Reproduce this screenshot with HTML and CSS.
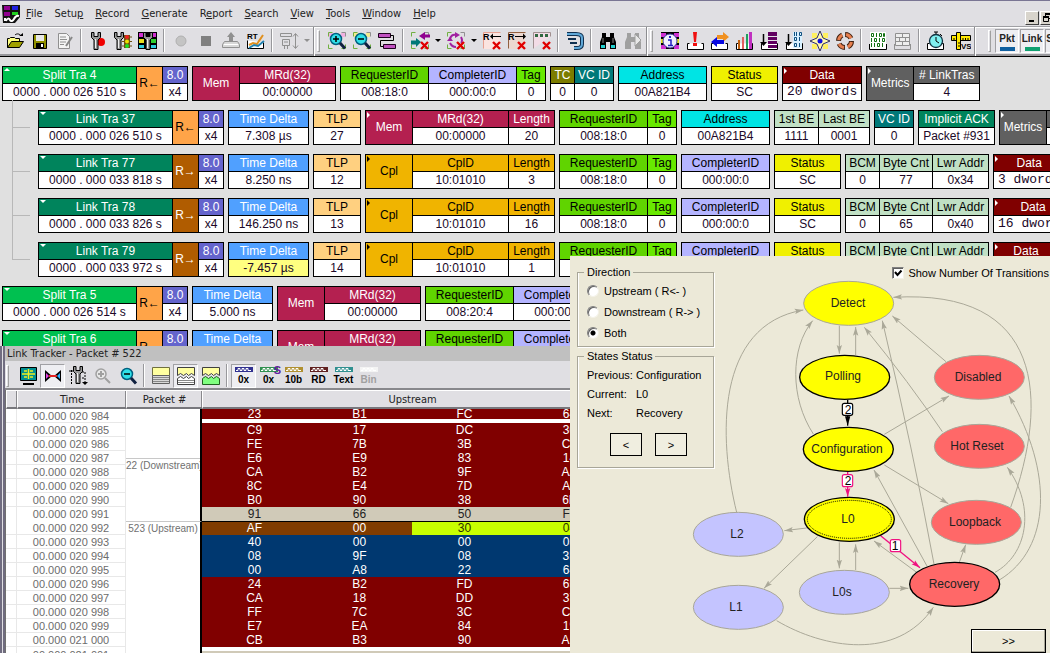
FILE: index.html
```html
<!DOCTYPE html>
<html lang="en">
<head>
<meta charset="utf-8">
<title>Protocol Analyzer</title>
<link rel="stylesheet" href="styles.css">
</head>
<body>
<svg class="defs" aria-hidden="true">
  <defs>
    <g id="tray"><path d="M3.5 12.5h-2v6h16v-6h-2" fill="#fff" stroke="#000"/></g>
    <g id="wrench"><path d="M.500 1.500v5l2.500 2.500v9.500h4v-9.500l2.500-2.500v-5h-2.500v4h-4v-4z" fill="#989898" stroke="#000"/><path d="M4.500 8v9" stroke="#f0f0f0"/></g>
    <g id="corners" fill="none" stroke="#70b040"><path d="M1.500 5.500v-4h4M1.500 13.500v4h4M14.500 17.500h4v-4"/><path d="M14.500 1.500h4v4" stroke="#909090"/></g>
    <g id="redx"><path d="M11 11l7 7M18 11l-7 7" stroke="#e00000" stroke-width="2.400"/></g>
    <g id="lens"><circle cx="9" cy="8" r="5.500" fill="#30e0e8" stroke="#006080" stroke-width="1.500"/><path d="M13 12l5 5.500" stroke="#102040" stroke-width="3"/></g>
    <g id="glasses"><path d="M4 2h4v4h4V2h4v4l2 5v7h-6v-7H8v7H2v-7l2-5z"/></g>
    <g id="strip"><rect width="18" height="5"/><path d="M1 3.500h2V1.500h2v2h2v-2h2v2h2v-2h2v2h3" fill="none" stroke="#fff"/></g>
  </defs>
</svg>

<header class="chrome">
  <nav class="menubar">
    <svg class="logo" viewBox="0 0 18 19"><path d="M0 1h18v12l-5 6H1z" fill="#111"/><path d="M2 2h6v4H2zM2 8h6v4H2z" fill="#900090"/><path d="M10 2h6v4h-6z" fill="#2020e0"/><path d="M10 8h6v3h-6z" fill="#20d020"/><path d="M4 17c1-3 3-3 4-1s3 1 4-1 2-4 5-3" stroke="#fff" stroke-width="2" fill="none"/><path d="M2 14h2v3H2z" fill="#fff"/></svg>
    <a href="#"><u>F</u>ile</a><a href="#">Setu<u>p</u></a><a href="#"><u>R</u>ecord</a><a href="#"><u>G</u>enerate</a><a href="#">R<u>e</u>port</a><a href="#"><u>S</u>earch</a><a href="#"><u>V</u>iew</a><a href="#"><u>T</u>ools</a><a href="#"><u>W</u>indow</a><a href="#"><u>H</u>elp</a>
    <div class="mdi">
      <button aria-label="Minimize"><svg viewBox="0 0 12 12"><path d="M3 9h5" stroke="#000" stroke-width="2"/></svg></button>
      <button aria-label="Restore"><svg viewBox="0 0 12 12"><path d="M4.500 4V2.500h5v4H8M2.500 5.500h5v4h-5z" fill="none" stroke="#000"/><path d="M4 2h6M2 5h6" stroke="#000" stroke-width="2"/></svg></button>
    </div>
  </nav>

  <div class="toolbar">
    <div class="band">
      <button class="tool" aria-label="Open"><svg viewBox="0 0 20 20"><path d="M2.500 16.500v-9h2l1-1h4l1 1h4v3" fill="#ffff80" stroke="#000"/><path d="M2.500 16.500l4-6h12l-4 6z" fill="#a0a000" stroke="#000"/><path d="M10 4c2-2 5-1 6 1" fill="none" stroke="#000"/><path d="M14 5h4V2z"/></svg></button>
      <button class="tool" aria-label="Save"><svg viewBox="0 0 20 20"><path d="M3.500 3.500h13v14h-13z" fill="#909000" stroke="#000"/><path d="M6 4h8v6H6z" fill="#e8e8e8"/><path d="M6 12h8v5H6z"/><path d="M11 13h2v3h-2z" fill="#fff"/></svg></button>
      <button class="tool" aria-label="Edit comment"><svg viewBox="0 0 20 20"><path d="M3.500 2.500h8l3 3v12h-11z" fill="#f4f4f4" stroke="#909090"/><path d="M5 6h6M5 8.500h7M5 11h6M5 13.500h4" stroke="#909090"/><path d="M17 6l-6 9" stroke="#888" stroke-width="2"/></svg></button>
      <i class="sep"></i>
      <button class="tool" aria-label="Recording options"><svg viewBox="0 0 20 20"><circle cx="13" cy="11" r="4" fill="#f00000"/><use href="#wrench" x="3"/></svg></button>
      <button class="tool" aria-label="Generation options"><svg viewBox="0 0 20 20"><path d="M11 4h6v13h-6z" fill="#705010"/><path d="M9 6h10M9 10.500h10M9 15h10" stroke="#705010"/><circle cx="14" cy="6" r="2" fill="#f02020"/><circle cx="14" cy="10.500" r="2" fill="#f0e000"/><circle cx="14" cy="15" r="2" fill="#20e020"/><use href="#wrench" x="1"/></svg></button>
      <button class="tool" aria-label="Display options"><svg viewBox="0 0 20 20"><path d="M0 1h19v17H0z"/><path d="M1 2h5v4H1zM13 2h5v4h-5z" fill="#d030d0"/><path d="M1 8h5v4H1z" fill="#e8e020"/><path d="M13 8h5v4h-5z" fill="#30d030"/><path d="M1 14h5v3H1zM13 14h5v3h-5z" fill="#30d0e0"/><use href="#wrench" x="5"/></svg></button>
      <i class="sep"></i>
      <button class="tool" aria-label="Record"><svg viewBox="0 0 20 20"><circle cx="10" cy="10" r="5" fill="#c4c4c4" stroke="#b0b0b0"/></svg></button>
      <button class="tool" aria-label="Stop"><svg viewBox="0 0 20 20"><path d="M5 5h10v10H5z" fill="#808080"/></svg></button>
      <button class="tool" aria-label="Upload"><svg viewBox="0 0 20 20"><path d="M10 1l4 5h-2v4H8V6H6z" fill="#909090"/><path d="M3.500 10.500h13l2 3v3h-17v-3z" fill="#d8d8d8" stroke="#909090"/><path d="M3 13.500h14" stroke="#fff"/></svg></button>
      <button class="tool" aria-label="Real time statistics"><svg viewBox="0 0 20 20"><path d="M1.500 9.500v8h16v-6" fill="#fff" stroke="#000"/><text x="1" y="8" class="t8">RT</text><path d="M3 14l4-2 4 1 6-9" fill="none" stroke="#e09020" stroke-width="2"/><path d="M3 17l5-3 4 1 6-5" fill="none" stroke="#2080b0" stroke-width="2"/></svg></button>
      <i class="sep"></i>
      <button class="tool" aria-label="Probe"><svg viewBox="0 0 20 20" fill="none" stroke="#909090"><path d="M1.500 2.500h11v3h-11zM3.500 8.500h7v6h-7zM5.500 14v4M8.500 14v4M5 11h4"/><path d="M16.500 3v14M14 5.500l2.500-3 2.500 3M14 14.500l2.500 3 2.500-3"/></svg></button>
      <button class="drop off" aria-label="Probe menu"></button>
    </div>
    <div class="band">
      <i class="grip"></i>
      <button class="tool" aria-label="Zoom in"><svg viewBox="0 0 20 20"><use href="#corners"/><path d="M2 2h4v4H2zM14 2h4v4h-4z" fill="#f0b0e0"/><use href="#lens"/><path d="M6 8h6M9 5v6" stroke="#000" stroke-width="1.500"/></svg></button>
      <button class="tool" aria-label="Zoom out"><svg viewBox="0 0 20 20"><use href="#corners"/><path d="M2 2h4v4H2zM14 2h4v4h-4z" fill="#f4ec90"/><use href="#lens"/><path d="M6 8h6" stroke="#000" stroke-width="1.500"/></svg></button>
      <button class="tool" aria-label="Wrap"><svg viewBox="0 0 20 20"><path d="M1.500 2.500h12v4h-12zM6.500 13.500h12v4h-12z" fill="#c050c0" stroke="#200020"/><path d="M13.500 4.500h3v5h-13v6h3" fill="none" stroke="#000" stroke-width="1"/></svg></button>
      <i class="sep"></i>
      <button class="tool" aria-label="Filter direction"><svg viewBox="0 0 20 20"><use href="#corners"/><path d="M9 5l6-4v2.500h5v3h-5V9z" fill="#900090"/><path d="M11 11l-5-4v2.500H1v4h5V16z" fill="#007878"/><use href="#redx"/></svg></button>
      <button class="drop" aria-label="Filter menu"></button>
      <button class="tool" aria-label="Filter split"><svg viewBox="0 0 20 20"><use href="#corners"/><path d="M4 9c0-4 3-6 6-5M15 6c2 4 1 5 0 6M10 16c-3 0-5-2-6-4" fill="none" stroke="#a020a0" stroke-width="2"/><path d="M9 1l5 3-5 3zM1 10h6l-3-4z" fill="#a020a0"/><use href="#redx"/></svg></button>
      <button class="drop" aria-label="Split menu"></button>
      <button class="tool" aria-label="Hide upstream"><svg viewBox="0 0 20 20"><path d="M1.500 17.500v-16h17" fill="none" stroke="#e8a090"/><path d="M2 2h16v16H2z" fill="#fbe4e0"/><text x="1" y="9" class="t9">R</text><path d="M10 5.500h9" stroke="#000"/><path d="M8 5.500l3-3v6z"/><use href="#redx"/></svg></button>
      <button class="tool" aria-label="Hide downstream"><svg viewBox="0 0 20 20"><path d="M1.500 17.500v-16h17" fill="none" stroke="#906040"/><path d="M2 2h16v16H2z" fill="#ecd8d0"/><text x="1" y="9" class="t9">R</text><path d="M8 5.500h9" stroke="#000"/><path d="M19 5.500l-3-3v6z"/><use href="#redx"/></svg></button>
      <button class="tool" aria-label="Hide idle"><svg viewBox="0 0 20 20"><path d="M1.500 17.500v-16h17v4" fill="#f2dce6" stroke="#a09090"/><path d="M3 3h3v3H3zM8 3h3v3H8zM13 3h3v3h-3z" fill="#306840"/><use href="#redx"/></svg></button>
      <i class="sep"></i>
      <button class="tool" aria-label="Go to"><svg viewBox="0 0 20 20"><path d="M2 3h9c5 0 6 2 6 4v6c0 3-2 4-5 4H9" fill="none" stroke="#103050" stroke-width="4"/><path d="M2 3h9c4 0 6 1 6 4v6c0 3-2 4-5 4H9" fill="none" stroke="#60a8d8" stroke-width="2"/><path d="M3 8h8M5 12h7" stroke="#103050" stroke-width="2"/></svg></button>
      <i class="sep"></i>
      <button class="tool" aria-label="Find"><svg viewBox="0 0 20 20"><use href="#glasses" fill="#000"/><path d="M3 14h4v3H3zM13 14h4v3h-4z" fill="#20d0d0"/><path d="M5 7v5M15 7v5" stroke="#888"/></svg></button>
      <button class="tool" aria-label="Find next"><svg viewBox="0 0 20 20"><use href="#glasses" fill="#a0a0a0"/><path d="M12 3l6 6-6 6z" fill="#e8e8e8" stroke="#a0a0a0"/></svg></button>
    </div>
    <div class="band">
      <i class="grip"></i>
      <button class="tool" aria-label="File information"><svg viewBox="0 0 20 20"><path d="M1 1h18v17H1z"/><path d="M1 2h5v4H1zM14 2h5v4h-5z" fill="#d030d0"/><path d="M1 8h5v4H1zM14 8h5v4h-5z" fill="#e8e020"/><path d="M1 14h5v4H1zM14 14h5v4h-5z" fill="#d030d0"/><circle cx="10" cy="10" r="7" fill="#f0f0ff" stroke="#4040a0"/><path d="M8 9h3v5M8 14.500h5" fill="none" stroke="#2020c0" stroke-width="1.500"/><path d="M9 5h2v2H9z" fill="#2020c0"/></svg></button>
      <button class="tool" aria-label="Error report"><svg viewBox="0 0 20 20"><use href="#tray" x="1"/><path d="M8 1h4l-1 10H9zM8 12h4v3H8z" fill="#f01010"/></svg></button>
      <button class="tool" aria-label="Transfer report"><svg viewBox="0 0 20 20"><use href="#tray"/><path d="M19 6l-6-5v3H7v4h6v3z" fill="#f09020"/><path d="M1 11l6-5v3h7v4H7v3z" fill="#0808e0"/></svg></button>
      <button class="tool" aria-label="Statistics"><svg viewBox="0 0 20 20"><use href="#tray"/><path d="M3 9h2v9H3z" fill="#c06010"/><path d="M7 6h2v12H7z" fill="#e06060"/><path d="M11 3h2v15h-2z" fill="#20a060"/><path d="M14 1h3v17h-3z" fill="#c030c0"/></svg></button>
      <button class="tool" aria-label="Packet list"><svg viewBox="0 0 20 20"><use href="#tray"/><path d="M3.500 3v10" stroke="#000" stroke-width="1.500"/><path d="M0 11h7l-3.500 4z"/><path d="M8 1h9v4H8zM8 6h9v3H8zM8 10h9v3H8zM8 14h9v3H8z" fill="#600060"/></svg></button>
      <button class="tool" aria-label="Data report"><svg viewBox="0 0 20 20"><use href="#tray"/><path d="M3.500 3v10" stroke="#000" stroke-width="1.500"/><path d="M0 11h7l-3.500 4z"/><path d="M8 1h9v16H8z" fill="#d8f0ff"/><g fill="none" stroke="#105080"><path d="M9.500 1v4M11.500 1v4M14.500 1.500h2v3h-2zM9.500 6.500h2v3h-2zM14.500 6v4M9.500 12.500h2v3h-2zM14.500 12v4"/></g></svg></button>
      <button class="tool" aria-label="Compass"><svg viewBox="0 0 20 20"><path d="M2 2h5v5H2zM13 2h5v5h-5zM2 13h5v5H2zM13 13h5v5h-5z" fill="#fff060"/><path d="M10 0l3 7 7 3-7 3-3 7-3-7-7-3 7-3z" fill="#fff8b0" stroke="#303060"/><circle cx="10" cy="10" r="2.500" fill="#1010e0"/></svg></button>
      <button class="tool" aria-label="Link cycle"><svg viewBox="0 0 20 20"><circle cx="10" cy="10" r="6.500" fill="none" stroke="#402010" stroke-width="5" stroke-dasharray="7 3"/><circle cx="10" cy="10" r="6.500" fill="none" stroke="#e88050" stroke-width="3" stroke-dasharray="6 4" stroke-dashoffset="-1"/></svg></button>
      <i class="sep"></i>
      <button class="tool" aria-label="Binary view"><svg viewBox="0 0 20 20"><path d="M2 1h16v17H2z" fill="#fff"/><path d="M1.500 13v5.500h17V13" fill="none" stroke="#000"/><g fill="none" stroke="#107010"><path d="M3.500 2.500h2v3h-2zM8.500 2v4M11.500 2.500h2v3h-2zM15.500 2.500h1v3h-1zM3.500 7v4M6.500 7.500h2v3h-2zM11.500 7v4M14.500 7.500h2v3h-2zM3.500 12v4M6.500 12v4M9.500 12.500h2v3h-2zM14.500 12v4"/></g></svg></button>
      <button class="tool" aria-label="Table view"><svg viewBox="0 0 20 20"><path d="M2.500 2.500h14v12h-14z" fill="#eee" stroke="#909090"/><path d="M2 6.500h14M2 10.500h14M9.500 2v4M6.500 6v4M12.500 6v4M9.500 10v4M1.500 13v5.500h16V13" fill="none" stroke="#909090"/></svg></button>
      <i class="sep"></i>
      <button class="tool" aria-label="Timing"><svg viewBox="0 0 20 20"><use href="#tray"/><circle cx="10" cy="10" r="6.500" fill="#80f0f0" stroke="#103040" stroke-width="1.300"/><path d="M10 6v4l3 2M10 3V1M8 1h4M14 3l2 2" fill="none" stroke="#000"/></svg></button>
      <button class="tool" aria-label="Bandwidth"><svg viewBox="0 0 20 20"><path d="M.500 4.500h19v5H.500z" fill="#ffe800" stroke="#000"/><path d="M5.500 1.500h4v17h-4z" fill="#ffe800" stroke="#000"/><path d="M3 7v2M12 7v2M14.500 7v2M17 7v2M7 12h2M7 15h2" stroke="#000"/><text x="10" y="18" class="t8">VS</text></svg></button>
    </div>
    <div class="band views">
      <i class="grip"></i>
      <button class="view pkt">Pkt</button><button class="view link">Link</button><button class="view split-view">Split</button>
    </div>
  </div>
</header>

<main class="workspace">
  <section class="trace">
    <div class="row">
      <div class="grp"><div class="cell id split up"><b>Split Tra 4</b><span>0000 . 000 026 510 s</span></div><div class="tall dir in"><p>R<small>←</small></p></div><div class="cell rate"><b>8.0</b><span>x4</span></div></div>
      <div class="grp"><div class="tall type mem">Mem</div><div class="cell cmd mem"><b>MRd(32)</b><span>00:00000</span></div></div>
      <div class="grp"><div class="cell addr req"><b>RequesterID</b><span>008:18:0</span></div><div class="cell addr cmpl"><b>CompleterID</b><span>000:00:0</span></div><div class="cell tag"><b>Tag</b><span>0</span></div></div>
      <div class="grp"><div class="cell tc"><b>TC</b><span>0</span></div><div class="cell vc"><b>VC ID</b><span>0</span></div></div>
      <div class="grp"><div class="cell addr adr"><b>Address</b><span>00A821B4</span></div></div>
      <div class="grp"><div class="cell status"><b>Status</b><span>SC</span></div></div>
      <div class="grp"><div class="cell data mark"><b>Data</b><span>20 dwords</span></div></div>
      <div class="grp"><div class="tall type metrics mark">Metrics</div><div class="cell tras metrics"><b># LinkTras</b><span>4</span></div></div>
    </div>
    <div class="row child">
      <div class="grp"><div class="cell id lnk down"><b>Link Tra 37</b><span>0000 . 000 026 510 s</span></div><div class="tall dir in"><p>R<small>←</small></p></div><div class="cell rate"><b>8.0</b><span>x4</span></div></div>
      <div class="grp"><div class="cell delta"><b>Time Delta</b><span>7.308 µs</span></div></div>
      <div class="grp"><div class="cell tlp"><b>TLP</b><span>27</span></div></div>
      <div class="grp"><div class="tall type mem mark">Mem</div><div class="cell cmd mem"><b>MRd(32)</b><span>00:00000</span></div><div class="cell len mem"><b>Length</b><span>20</span></div></div>
      <div class="grp"><div class="cell addr req"><b>RequesterID</b><span>008:18:0</span></div><div class="cell tag"><b>Tag</b><span>0</span></div></div>
      <div class="grp"><div class="cell addr adr"><b>Address</b><span>00A821B4</span></div></div>
      <div class="grp"><div class="cell be1 pale"><b>1st BE</b><span>1111</span></div><div class="cell be2 pale"><b>Last BE</b><span>0001</span></div></div>
      <div class="grp"><div class="cell vc"><b>VC ID</b><span>0</span></div></div>
      <div class="grp"><div class="cell ack"><b>Implicit ACK</b><span>Packet #931</span></div></div>
      <div class="grp"><div class="tall type metrics mark">Metrics</div><div class="cell tras metrics"><b></b><span></span></div></div>
    </div>
    <div class="row child">
      <div class="grp"><div class="cell id lnk down"><b>Link Tra 77</b><span>0000 . 000 033 818 s</span></div><div class="tall dir out"><p>R<small>→</small></p></div><div class="cell rate"><b>8.0</b><span>x4</span></div></div>
      <div class="grp"><div class="cell delta"><b>Time Delta</b><span>8.250 ns</span></div></div>
      <div class="grp"><div class="cell tlp"><b>TLP</b><span>12</span></div></div>
      <div class="grp"><div class="tall type cpl mark">Cpl</div><div class="cell cmd cpl"><b>CplD</b><span>10:01010</span></div><div class="cell len cpl"><b>Length</b><span>3</span></div></div>
      <div class="grp"><div class="cell addr req"><b>RequesterID</b><span>008:18:0</span></div><div class="cell tag"><b>Tag</b><span>0</span></div></div>
      <div class="grp"><div class="cell addr cmpl"><b>CompleterID</b><span>000:00:0</span></div></div>
      <div class="grp"><div class="cell status"><b>Status</b><span>SC</span></div></div>
      <div class="grp"><div class="cell bcm pale"><b>BCM</b><span>0</span></div><div class="cell cnt pale"><b>Byte Cnt</b><span>77</span></div><div class="cell lwr pale"><b>Lwr Addr</b><span>0x34</span></div></div>
      <div class="grp"><div class="cell data mark"><b>Data</b><span>3 dwords</span></div></div>
    </div>
    <div class="row child">
      <div class="grp"><div class="cell id lnk down"><b>Link Tra 78</b><span>0000 . 000 033 826 s</span></div><div class="tall dir out"><p>R<small>→</small></p></div><div class="cell rate"><b>8.0</b><span>x4</span></div></div>
      <div class="grp"><div class="cell delta"><b>Time Delta</b><span>146.250 ns</span></div></div>
      <div class="grp"><div class="cell tlp"><b>TLP</b><span>13</span></div></div>
      <div class="grp"><div class="tall type cpl mark">Cpl</div><div class="cell cmd cpl"><b>CplD</b><span>10:01010</span></div><div class="cell len cpl"><b>Length</b><span>16</span></div></div>
      <div class="grp"><div class="cell addr req"><b>RequesterID</b><span>008:18:0</span></div><div class="cell tag"><b>Tag</b><span>0</span></div></div>
      <div class="grp"><div class="cell addr cmpl"><b>CompleterID</b><span>000:00:0</span></div></div>
      <div class="grp"><div class="cell status"><b>Status</b><span>SC</span></div></div>
      <div class="grp"><div class="cell bcm pale"><b>BCM</b><span>0</span></div><div class="cell cnt pale"><b>Byte Cnt</b><span>65</span></div><div class="cell lwr pale"><b>Lwr Addr</b><span>0x40</span></div></div>
      <div class="grp"><div class="cell data mark"><b>Data</b><span>16 dwords</span></div></div>
    </div>
    <div class="row child">
      <div class="grp"><div class="cell id lnk down"><b>Link Tra 79</b><span>0000 . 000 033 972 s</span></div><div class="tall dir out"><p>R<small>→</small></p></div><div class="cell rate"><b>8.0</b><span>x4</span></div></div>
      <div class="grp"><div class="cell delta warn"><b>Time Delta</b><span>-7.457 µs</span></div></div>
      <div class="grp"><div class="cell tlp"><b>TLP</b><span>14</span></div></div>
      <div class="grp"><div class="tall type cpl mark">Cpl</div><div class="cell cmd cpl"><b>CplD</b><span>10:01010</span></div><div class="cell len cpl"><b>Length</b><span>1</span></div></div>
      <div class="grp"><div class="cell addr req"><b>RequesterID</b><span></span></div><div class="cell tag"><b>Tag</b><span></span></div></div>
      <div class="grp"><div class="cell addr cmpl"><b>CompleterID</b><span></span></div></div>
      <div class="grp"><div class="cell status"><b>Status</b><span></span></div></div>
      <div class="grp"><div class="cell bcm pale"><b>BCM</b><span></span></div><div class="cell cnt pale"><b>Byte Cnt</b><span></span></div><div class="cell lwr pale"><b>Lwr Addr</b><span></span></div></div>
      <div class="grp"><div class="cell data short mark"><b>Data</b><span></span></div></div>
    </div>
    <div class="row">
      <div class="grp"><div class="cell id split down"><b>Split Tra 5</b><span>0000 . 000 026 514 s</span></div><div class="tall dir in"><p>R<small>←</small></p></div><div class="cell rate"><b>8.0</b><span>x4</span></div></div>
      <div class="grp"><div class="cell delta"><b>Time Delta</b><span>5.000 ns</span></div></div>
      <div class="grp"><div class="tall type mem">Mem</div><div class="cell cmd mem"><b>MRd(32)</b><span>00:00000</span></div></div>
      <div class="grp"><div class="cell addr req"><b>RequesterID</b><span>008:20:4</span></div><div class="cell addr cmpl"><b>CompleterID</b><span>000:00:0</span></div></div>
    </div>
    <div class="row">
      <div class="grp"><div class="cell id split down"><b>Split Tra 6</b><span></span></div><div class="tall dir in"><p>R<small>←</small></p></div><div class="cell rate"><b>8.0</b><span></span></div></div>
      <div class="grp"><div class="cell delta"><b>Time Delta</b><span></span></div></div>
      <div class="grp"><div class="tall type mem">Mem</div><div class="cell cmd mem"><b>MRd(32)</b><span></span></div></div>
      <div class="grp"><div class="cell addr req"><b>RequesterID</b><span></span></div><div class="cell addr cmpl"><b>CompleterID</b><span></span></div></div>
    </div>
  </section>

  <section class="tracker">
    <h2>Link Tracker - Packet # 522</h2>
    <div class="tracker-tools">
      <i class="grip"></i>
      <button class="tool" aria-label="Fit"><svg viewBox="0 0 20 20"><path d="M2.500 1.500h16v13h-16z" fill="#009090" stroke="#000"/><path d="M4 8h13M10.500 3v10M6 5h3M12 5h3M6 11h3M12 11h3" stroke="#f0f020" stroke-width="1.500"/><path d="M5 17h11v2H5z"/></svg></button>
      <button class="tool on" aria-label="Sync"><svg viewBox="0 0 20 20"><path d="M2 4l7 6-7 6zM18 4l-7 6 7 6z"/><path d="M3 7l3 3-3 3z" fill="#e040e0"/><path d="M17 7l-3 3 3 3z" fill="#30b0ff"/><path d="M6 10h8" stroke="#e02020" stroke-width="2"/></svg></button>
      <button class="tool" aria-label="Tracker options"><svg viewBox="0 0 20 20"><use href="#wrench" x="5" y="-1"/><path d="M3.500 4v14M1 5h4M14 6h3v12M14 12h3" fill="none" stroke="#000" stroke-dasharray="2 1"/><path d="M14 16h6l-3 3z"/></svg></button>
      <button class="tool" aria-label="Zoom in"><svg viewBox="0 0 20 20"><circle cx="8" cy="8" r="5" fill="#e8e8e8" stroke="#a0a0a0" stroke-width="1.500"/><path d="M5 8h6M8 5v6M12 12l5 5" stroke="#a0a0a0" stroke-width="2"/></svg></button>
      <button class="tool" aria-label="Zoom out"><svg viewBox="0 0 20 20"><use href="#lens"/><path d="M6 8h6" stroke="#000" stroke-width="1.500"/></svg></button>
      <i class="sep"></i>
      <button class="tool" aria-label="Collapse none"><svg viewBox="0 0 20 20"><path d="M1.500 1.500h17v8h-17z" fill="#ffffa0" stroke="#707040"/><path d="M1.500 9.500h17v8h-17z" fill="#d8d8d8" stroke="#606060"/><path d="M2 11.500h16M2 13.500h16M2 15.500h16" stroke="#888"/></svg></button>
      <button class="tool on" aria-label="Collapse idle"><svg viewBox="0 0 20 20"><path d="M1.500 9.500v-8h17v8l-3-2-3 2-2-2-3 2-3-2z" fill="#ffffa0" stroke="#404040"/><path d="M1.500 18.500v-6l3-2 3 2 3-2 2 2 3-2 3 2v6z" fill="#fff" stroke="#404040"/><path d="M2 14.500h16M2 16.500h16" stroke="#888"/></svg></button>
      <button class="tool" aria-label="Collapse all"><svg viewBox="0 0 20 20"><path d="M1.500 9.500v-8h17v8l-3-2-3 2-2-2-3 2-3-2z" fill="#ffffa0" stroke="#404040"/><path d="M1.500 18.500v-6l3-2 3 2 3-2 2 2 3-2 3 2v6z" fill="#80ff80" stroke="#206020"/></svg></button>
      <i class="sep"></i>
      <button class="fmt hex on"><svg viewBox="0 0 18 5"><use href="#strip"/></svg>0x</button>
      <button class="fmt scr"><svg viewBox="0 0 18 5"><use href="#strip"/></svg>0x<sup>S</sup></button>
      <button class="fmt ten"><svg viewBox="0 0 18 5"><use href="#strip"/></svg>10b</button>
      <button class="fmt rd"><svg viewBox="0 0 18 5"><use href="#strip"/></svg>RD</button>
      <button class="fmt txt"><svg viewBox="0 0 18 5"><use href="#strip"/></svg>Text</button>
      <button class="fmt bin" disabled><svg viewBox="0 0 18 5"><use href="#strip"/></svg>Bin</button>
    </div>
    <div class="grid-view">
      <table>
        <colgroup><col class="c-mark"><col class="c-time"><col class="c-pkt"><col class="c-byte"><col class="c-byte"><col class="c-byte"><col class="c-byte"></colgroup>
        <thead><tr><th></th><th>Time</th><th>Packet #</th><th colspan="4">Upstream</th></tr></thead>
        <tbody>
          <tr class="tail"><td></td><td>00.000 020 984</td><td class="pkt-a" rowspan="8"><div>22 (Downstream)</div></td><td>23</td><td>B1</td><td>FC</td><td>64</td></tr>
          <tr><td></td><td>00.000 020 985</td><td>C9</td><td>17</td><td>DC</td><td>30</td></tr>
          <tr><td></td><td>00.000 020 986</td><td>FE</td><td>7B</td><td>3B</td><td>C0</td></tr>
          <tr><td></td><td>00.000 020 987</td><td>E6</td><td>E9</td><td>83</td><td>14</td></tr>
          <tr><td></td><td>00.000 020 988</td><td>CA</td><td>B2</td><td>9F</td><td>AA</td></tr>
          <tr><td></td><td>00.000 020 989</td><td>8C</td><td>E4</td><td>7D</td><td>A5</td></tr>
          <tr><td></td><td>00.000 020 990</td><td>B0</td><td>90</td><td>38</td><td>6E</td></tr>
          <tr class="tan skip"><td></td><td>00.000 020 991</td><td>91</td><td>66</td><td>50</td><td>F5</td></tr>
          <tr class="start"><td></td><td>00.000 020 992</td><td class="pkt-b" rowspan="11">523 (Upstream)</td><td class="brown">AF</td><td class="brown">00</td><td class="lime">30</td><td class="lime">04</td></tr>
          <tr class="blue"><td></td><td>00.000 020 993</td><td>40</td><td>00</td><td>00</td><td>05</td></tr>
          <tr class="blue"><td></td><td>00.000 020 994</td><td>08</td><td>9F</td><td>08</td><td>3F</td></tr>
          <tr class="blue"><td></td><td>00.000 020 995</td><td>00</td><td>A8</td><td>22</td><td>64</td></tr>
          <tr><td></td><td>00.000 020 996</td><td>24</td><td>B2</td><td>FD</td><td>65</td></tr>
          <tr><td></td><td>00.000 020 997</td><td>CA</td><td>18</td><td>DD</td><td>37</td></tr>
          <tr><td></td><td>00.000 020 998</td><td>FF</td><td>7C</td><td>3C</td><td>C8</td></tr>
          <tr><td></td><td>00.000 020 999</td><td>E7</td><td>EA</td><td>84</td><td>19</td></tr>
          <tr><td></td><td>00.000 021 000</td><td>CB</td><td>B3</td><td>90</td><td>AE</td></tr>
          <tr class="tan lead"><td></td><td>00.000 021 001</td><td></td><td></td><td></td><td></td></tr>
          <tr class="tan"><td></td><td></td><td></td><td></td><td></td><td></td></tr>
        </tbody>
      </table>
    </div>
  </section>

  <section class="states">
    <div class="controls">
      <div class="boxes">
        <fieldset class="direction">
          <legend>Direction</legend>
          <label><input type="radio" name="dir">Upstream ( R&lt;- )</label>
          <label><input type="radio" name="dir">Downstream ( R-&gt; )</label>
          <label><input type="radio" name="dir" checked>Both</label>
        </fieldset>
        <fieldset class="status-box">
          <legend>States Status</legend>
          <dl><dt>Previous:</dt><dd>Configuration</dd><dt>Current:</dt><dd>L0</dd><dt>Next:</dt><dd>Recovery</dd></dl>
          <div class="steps"><button>&lt;</button><button>&gt;</button></div>
        </fieldset>
      </div>
      <label class="show"><input type="checkbox" checked>Show Number Of Transitions</label>
    </div>
    <svg class="diagram" viewBox="0 0 360 388">
      <defs>
        <marker id="ah" markerUnits="userSpaceOnUse" markerWidth="28" markerHeight="18" refX="26" refY="9" orient="auto"><path d="M0 1l26 8-26 8 5-8z" fill="#aaa898"/></marker>
        <marker id="ak" markerUnits="userSpaceOnUse" markerWidth="30" markerHeight="18" refX="28" refY="9" orient="auto"><path d="M0 1l28 8-28 8z" fill="#000"/></marker>
        <marker id="am" markerUnits="userSpaceOnUse" markerWidth="28" markerHeight="18" refX="26" refY="9" orient="auto"><path d="M0 1l26 8-26 8 5-8z" fill="#f01080"/></marker>
      </defs>
      <g transform="scale(.33333)">
        <g class="edges">
          <path d="M448 182V266"/><path d="M497 270V186"/>
          <path d="M140 742C85 520 75 180 340 135"/>
          <path d="M370 507C300 400 300 250 368 167"/>
          <path d="M350 789L283 797"/><path d="M382 815L222 970"/>
          <path d="M448 832V910"/><path d="M497 915V838"/>
          <path d="M598 970H655"/><path d="M680 922L552 828"/>
          <path d="M712 905L552 615"/><path d="M732 897Q670 560 577 167"/>
          <path d="M757 500Q660 355 523 187"/><path d="M768 290L607 153"/>
          <path d="M583 508L777 393"/><path d="M583 600L775 716"/>
          <path d="M808 892L827 839"/>
          <path d="M915 922C1010 870 1040 730 952 607"/>
          <path d="M928 945C1085 850 1090 620 957 393"/>
          <path d="M962 727C1080 400 1060 70 610 97"/>
          <path d="M260 1067C400 1150 620 1190 730 1027"/>
        </g>
        <g stroke-width="4" fill="none"><path d="M473 405V482" stroke="#000" marker-end="url(#ak)"/><path d="M473 620V695" stroke="#f01080" marker-end="url(#am)"/><path d="M572 812L690 908" stroke="#f01080" marker-end="url(#am)"/></g>
        <g class="nodes">
          <ellipse class="y" cx="476" cy="115" rx="135" ry="66"/>
          <ellipse class="y k" cx="464" cy="337" rx="135" ry="66"/>
          <ellipse class="y k" cx="475" cy="553" rx="135" ry="66"/>
          <ellipse class="y k" cx="478" cy="763" rx="135" ry="66"/>
          <ellipse class="dots" cx="478" cy="763" rx="126" ry="57"/>
          <ellipse class="b" cx="145" cy="808" rx="135" ry="66"/>
          <ellipse class="b" cx="145" cy="1027" rx="135" ry="66"/>
          <ellipse class="b" cx="463" cy="982" rx="135" ry="66"/>
          <ellipse class="r k" cx="794" cy="958" rx="135" ry="66"/>
          <ellipse class="r" cx="868" cy="337" rx="135" ry="66"/>
          <ellipse class="r" cx="868" cy="544" rx="135" ry="66"/>
          <ellipse class="r" cx="859" cy="772" rx="135" ry="66"/>
        </g>
        <g fill="#fff" stroke-width="3.500"><rect x="457" y="415" width="31" height="36" rx="6" stroke="#000"/><rect x="457" y="629" width="31" height="36" rx="6" stroke="#f01080"/><rect x="601" y="824" width="31" height="36" rx="6" stroke="#f01080"/></g>
      </g>
      <g class="labels">
        <text x="158" y="42">Detect</text><text x="153" y="115">Polling</text><text x="157" y="188">Configuration</text><text x="158" y="258">L0</text>
        <text x="47" y="273">L2</text><text x="46" y="346">L1</text><text x="152" y="331">L0s</text><text x="264" y="323">Recovery</text>
        <text x="288" y="116">Disabled</text><text x="287" y="185">Hot Reset</text><text x="285" y="261">Loopback</text>
      </g>
      <g class="counts"><text x="158" y="149">2</text><text x="158" y="220">2</text><text x="205" y="285">1</text></g>
    </svg>
    <button class="more">&gt;&gt;</button>
  </section>
</main>
</body>
</html>
```
FILE: styles.css
```css
*, *::before, *::after { box-sizing: border-box; }
body {
  margin: 0;
  height: 100vh;
  display: flex;
  flex-direction: column;
  overflow: hidden;
  background: #e0e0e0;
  color: #000;
  font: 12px/16px "Liberation Sans", Arial, sans-serif;
}
button { font: inherit; color: inherit; padding: 0; margin: 0; border: 0; background: none; flex: none; }
.defs { display: none; }
p, h2, dl, dd { margin: 0; font: inherit; }

/* menu bar */
.chrome { flex: none; background: #e0dfe3; border-top: 1px solid #7a7694; }
.menubar { display: flex; align-items: center; height: 25px; padding-left: 2px; gap: 12px; font: 11px/16px "DejaVu Sans Condensed", "Liberation Sans", sans-serif; }
.menubar a { color: #222; text-decoration: none; }
.logo { width: 18px; height: 19px; margin-right: -6px; }
.mdi { display: flex; gap: 1px; margin: 8px -4px 0 auto; }
.mdi button { width: 14px; height: 14px; background: #d8d4cc; border: 1px solid #fff; border-right-color: #404040; border-bottom-color: #404040; }
.mdi svg { display: block; width: 12px; height: 12px; }

/* toolbar */
.toolbar { display: flex; height: 31px; overflow: hidden; border-top: 1px solid #a0a0a4; border-bottom: 1px solid #000; box-shadow: inset 0 1px #fff, inset 0 -2px #98989c; }
.band { display: flex; align-items: center; flex: none; padding: 0 1px 2px 2px; border-right: 1px solid #8c8c90; box-shadow: 1px 0 #fff; }
.band + .band { padding-left: 3px; }
.band.views { margin-left: 10px; border-right: 0; }
.grip { flex: none; width: 3px; height: 22px; margin-right: 4px; border: 1px solid #a0a0a0; border-left-color: #fff; border-top-color: #fff; }
.sep { flex: none; width: 8px; height: 23px; background: linear-gradient(90deg, #98989c 1px, #fff 1px, #fff 2px, transparent 2px) 3px 0 no-repeat; }
.tool { width: 25px; height: 24px; display: flex; align-items: center; justify-content: center; }
.tool svg { width: 20px; height: 20px; flex: none; }
.tool.on, .fmt.on, .view { border: 1px solid #a0a0a4; border-right-color: #fff; border-bottom-color: #fff; background: #eeeef2; }
.drop { width: 11px; height: 24px; display: flex; align-items: center; justify-content: center; }
.drop::before { content: ""; border: 3px solid transparent; border-top-color: #000; border-bottom: 0; }
.drop.off::before { border-top-color: #909090; }
.t8, .t9 { font: bold 8px "Liberation Sans", sans-serif; }
.t9 { font-size: 9px; }
.view { width: 24px; height: 24px; margin-right: 1px; overflow: hidden; display: flex; flex-direction: column; align-items: center; color: #222; font: bold 10px/17px "Liberation Sans", sans-serif; }
.view::after { content: ""; width: 15px; height: 4px; background: #1060a0; }
.view.link::after { background: #10a070; }

/* trace rows */
.workspace { position: relative; flex: 1; min-height: 0; overflow: hidden; }
.trace { display: flex; flex-direction: column; gap: 9px; padding: 9px 0 0 2px; }
.row { display: flex; gap: 4px; }
.child::before { content: ""; flex: none; width: 18px; height: 44px; margin: -26px 4px 17px 10px; border: solid #b8b8b8; border-width: 0 0 1px 1px; }
.grp { display: flex; flex: none; gap: 1px; height: 35px; padding: 1px; background: #000; }
.cell, .tall { position: relative; flex: none; text-align: center; white-space: nowrap; }
.cell { display: grid; grid-template-rows: 16px 16px; gap: 1px; }
.cell b { font-weight: normal; }
.cell span { background: #fff; color: #200828; }
.tall { line-height: 33px; }
.dir p { display: flex; justify-content: center; }
.dir small { font-size: 12px; }
.id { width: 133px; }
.dir { width: 25px; }
.rate { width: 24px; }
.type { width: 46px; }
.cmd { width: 95px; }
.len { width: 45px; }
.addr { width: 87px; }
.tag { width: 28px; }
.tc { width: 23px; }
.vc { width: 38px; }
.status, .tras { width: 65px; }
.delta { width: 79px; }
.tlp { width: 46px; }
.be1 { width: 43px; }
.be2 { width: 50px; }
.ack { width: 75px; }
.bcm { width: 33px; }
.cnt { width: 52px; }
.lwr { width: 55px; }
.split b { background: #00c050; color: #fff; }
.lnk b, .ack b { background: #00845c; color: #fff; }
.in { background: #ffa448; }
.out { background: #b05c00; color: #fff; }
.rate b { background: #6464cc; color: #fff; }
.tall.mem, .mem b { background: #b42050; color: #fff; }
.tall.cpl, .cpl b { background: #f0b400; }
.req b { background: #60d400; }
.cmpl b { background: #b4b4ff; }
.tag b { background: #68e800; }
.tc b { background: #7c7c00; color: #fff; }
.vc b { background: #007878; color: #fff; }
.adr b { background: #00e4e4; }
.status b { background: #f0f000; }
.data b { background: #800000; color: #fff; }
.data span { padding: 0 4px; font: 13px/16px "Liberation Mono", monospace; }
.data.short { width: 64px; }
.tall.metrics, .metrics b { background: #606060; color: #fff; }
.delta b { background: #50a0ff; color: #fff; }
.warn span { background: #ffff80; }
.tlp b { background: #ffd080; }
.pale b { background: #c0e0c4; }
.up::after, .down::after, .mark::after { content: ""; position: absolute; left: 1px; top: 1px; border: 3px solid transparent; }
.up::after { border-bottom-color: #fff; border-top: 0; }
.down::after { border-top-color: #fff; border-bottom: 0; }
.mark::after { border-left-color: #fff; border-right: 0; }
.cpl.mark::after { border-left-color: #000; }

/* link tracker window */
.tracker { position: absolute; left: 0; right: 480px; top: 289px; bottom: 0; display: flex; flex-direction: column; border-left: 5px double #706c80; background: #e0dfe3; overflow: hidden; }
.tracker h2 { height: 15px; flex: none; padding-left: 2px; background: #c0c0c0; color: #222; font: 11px/15px "DejaVu Sans Condensed", "Liberation Sans", sans-serif; }
.tracker-tools { display: flex; align-items: center; flex: none; height: 29px; padding: 2px 0 0 1px; border-bottom: 2px solid #88888c; }
.tracker-tools .grip { margin-right: 6px; }
.fmt { position: relative; width: 25px; height: 24px; display: flex; flex-direction: column; align-items: center; font: bold 10px/14px "Liberation Sans", sans-serif; }
.fmt svg { width: 18px; height: 5px; margin: 3px 0 1px; fill: #303090; flex: none; }
.fmt.on svg { margin-top: 2px; }
.fmt sup { position: absolute; right: 0; top: 1px; font-size: 11px; line-height: 11px; color: #6020a0; }
.scr svg { fill: #309050; }
.ten svg { fill: #b09030; }
.rd svg { fill: #602020; }
.txt svg { fill: #309090; }
.bin { color: #a0a0a0; }
.bin svg { fill: #f4f4f4; }
.grid-view { flex: 1; min-height: 0; overflow: hidden; background: #fff; border-left: 1px solid #707070; }
table { width: 616px; table-layout: fixed; border-collapse: separate; border-spacing: 0; }
.c-mark { width: 11px; }
.c-time { width: 109px; }
.c-pkt { width: 76px; }
.c-byte { width: 105px; }
th { height: 19px; padding: 1px 0 0; background: #e0dfe3; border: solid #fff; border-width: 1px 0 0 1px; border-bottom: 2px solid #77777c; box-shadow: inset -1px 0 #88888c; color: #222; font: 11px/15px "DejaVu Sans Condensed", "Liberation Sans", sans-serif; }
td { height: 14px; padding: 0; text-align: center; line-height: 14px; background: #800000; color: #fff; }
td:nth-child(1), td:nth-child(2) { background: #fff; color: #6c6c6c; font-size: 11px; line-height: 12px; padding-top: 1px; border: solid #e8e8e8; border-width: 0 1px 1px 0; }
td.pkt-a, td.pkt-b { background: #fff; color: #707070; font-size: 10px; white-space: nowrap; overflow: hidden; border-right: 2px solid #000; }
.pkt-a { vertical-align: bottom; }
.pkt-a div { height: 63px; border-top: 1px solid #c8c8c8; }
.pkt-b { vertical-align: top; border-top: 1px solid #c8c8c8; }
.tail td:nth-child(n+4) { border-bottom: 4px solid #fff; line-height: 10px; }
.tan td:nth-child(n+3) { background: #d0cab8; color: #222; }
.tan td { border-bottom: 0; }
.skip td { height: 13px; line-height: 13px; }
.tan.lead td:nth-child(n+3) { border-top: 4px solid #fff; }
.start td:nth-child(n+4) { border-top: 1px solid #000; line-height: 13px; }
.blue td:nth-child(n+3) { background: #003870; }
td.brown { background: #803c00; }
td.lime { background: #c8ff00; color: #303000; }

/* state machine window */
.states { position: absolute; right: 0; top: 199px; bottom: 0; width: 480px; display: flex; flex-direction: column; padding: 10px 1px 0 7px; background: #ece9d8; font-size: 11px; }
.controls { display: flex; justify-content: space-between; align-items: flex-start; }
.boxes { display: flex; flex-direction: column; gap: 3px; width: 137px; }
fieldset { min-width: 0; margin: 0; padding: 0 9px; border: 1px solid #a8a698; box-shadow: 1px 1px #fff, inset 1px 0 #fff; }
legend { margin-left: -3px; padding: 0 3px; line-height: 12px; }
.direction { height: 81px; }
.direction label { display: flex; align-items: center; gap: 5px; height: 21px; }
.direction label:first-of-type { margin-top: 2px; }
input { appearance: none; flex: none; width: 12px; height: 12px; margin: 0; background: #fff; border: 1px solid #808080; border-right-color: #f4f2e8; border-bottom-color: #f4f2e8; box-shadow: inset 1px 1px #606060; }
input[type="radio"] { border-radius: 50%; }
input[type="radio"]:checked { background: radial-gradient(#000 2px, #fff 3px); }
input[type="checkbox"]:checked { background: #fff url("data:image/svg+xml,%3Csvg xmlns='http://www.w3.org/2000/svg' viewBox='0 0 10 10'%3E%3Cpath d='M2 4l2.500 3L8.500 2.500' fill='none' stroke='%23000' stroke-width='2'/%3E%3C/svg%3E"); }
.show { display: flex; align-items: center; gap: 4px; white-space: nowrap; margin-top: -1px; }
.status-box { height: 118px; }
dl { display: grid; grid-template-columns: 49px auto; line-height: 19px; margin-top: 4px; }
.steps { display: flex; justify-content: center; gap: 13px; margin-top: 10px; padding-left: 6px; }
.steps button { width: 32px; height: 23px; border: 1px solid #000; background: #f0eee0; }
.diagram { position: absolute; right: 0; top: 9px; width: 360px; height: 388px; pointer-events: none; }
.edges { fill: none; stroke: #aaa898; stroke-width: 3; }
.edges path { marker-end: url(#ah); }
.nodes { stroke: #a8a698; stroke-width: 3; }
.y { fill: #ffff00; }
.b { fill: #c4c4ff; }
.r { fill: #ff6868; }
.k { stroke: #000; stroke-width: 4; }
.dots { fill: none; stroke: #000; stroke-dasharray: 3 3; }
.labels { text-anchor: middle; font: 12px "Liberation Sans", sans-serif; fill: #222; }
.counts { text-anchor: middle; font: 12px "Liberation Sans", sans-serif; }
.more { align-self: flex-end; width: 75px; height: 24px; margin: auto 3px 0 0; border: 1px solid #000; box-shadow: inset -1px -1px #a8a698, inset 1px 1px #fff; }
```
